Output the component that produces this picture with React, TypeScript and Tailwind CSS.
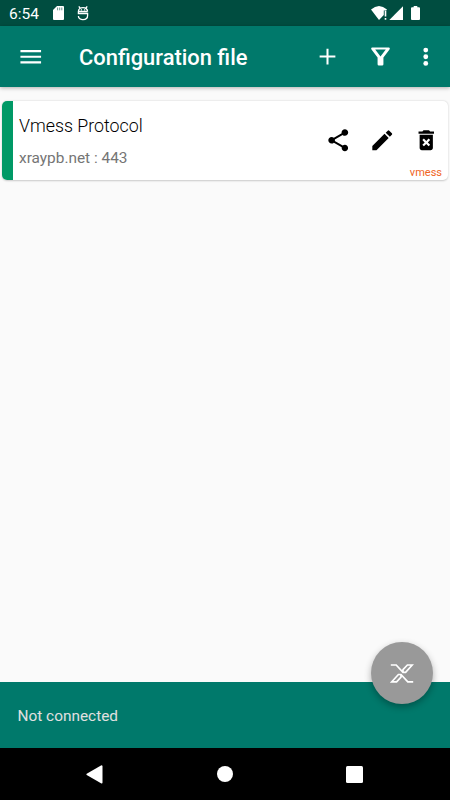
import React from "react";

type IconProps = { size: number; className?: string; children: React.ReactNode };

function Icon({ size, className = "", children }: IconProps) {
  return (
    <svg width={size} height={size} viewBox="0 0 24 24" fill="currentColor" className={`shrink-0 ${className}`}>
      {children}
    </svg>
  );
}

function StatusBar() {
  return (
    <div className="flex h-[26px] shrink-0 items-center bg-[#004d40] pl-[9px] text-white">
      <span className="w-[44px] pt-px text-[15.5px] leading-[26px]">6:54</span>
      <svg width="11" height="14" viewBox="0 0 11 14" className="shrink-0">
        <path d="M4 0H10Q11 0 11 1V13Q11 14 10 14H1Q0 14 0 13V4Z" fill="#fff" />
        <path d="M4.6 1.5V4.3M6.7 1.5V4.3M8.8 1.5V4.3" stroke="#004d40" strokeWidth="0.6" />
      </svg>
      <svg width="12" height="15" viewBox="0 0 12 15" className="ml-[13px] shrink-0" fill="none" stroke="#fff" strokeWidth="1.3">
        <path d="M1.8 .4 3 2M10.2 .4 9 2M10.6 5.5C10.6 .4 1.4 .4 1.4 5.5V7.5H10.6V9.6C10.6 15 1.4 15 1.4 10M1.4 5.5H10.6" />
        <path d="M3.8 3.8H5M7 3.8H8.2" />
      </svg>
      <svg width="51" height="16" viewBox="0 0 51 16" className="ml-[282px] shrink-0" fill="#fff">
        <path d="M0 4.6Q8 -2.4 16 4.6L15.2 5.6H12.8V10L8 15Z" />
        <path d="M13.7 5.8H15.3V11.6H13.7ZM13.7 13H15.3V14.8H13.7Z" />
        <path d="M18.3 15H32V1.2Z" />
        <path d="M42.7 1H46.3V2.3H48Q49 2.3 49 3.3V14Q49 15 48 15H41Q40 15 40 14V3.3Q40 2.3 41 2.3H42.7Z" />
      </svg>
    </div>
  );
}

function AppBar() {
  return (
    <header className="z-10 flex h-[61px] shrink-0 items-center bg-[#00796b] pl-[17px] text-white shadow-[0_1px_4px_rgba(0,0,0,0.3)]">
      <Icon size={27.5}>
        <path d="M3 17.8h18v-1.8H3v1.8zm0-4.9h18v-1.8H3v1.8zm0-6.7v1.8h18V6.2H3z" />
      </Icon>
      <h1 className="ml-[34.5px] w-[234.5px] pt-[3px] text-[21.9px] font-medium leading-[30px] whitespace-nowrap">
        Configuration file
      </h1>
      <Icon size={27}>
        <path d="M19 12.9h-6.1V19h-1.8v-6.1H5v-1.8h6.1V5h1.8v6.1H19z" />
      </Icon>
      <Icon size={27} className="ml-[26px]">
        <path d="M4.6 4H19.4C20.4 4 20.5 5 20 5.7L14.6 12.9V18.8Q14.6 20 13.4 20H10.6Q9.4 20 9.4 18.8V12.9L4 5.7C3.5 5 3.6 4 4.6 4ZM7.3 5.8L12 12 16.7 5.8Z" fillRule="evenodd" />
      </Icon>
      <Icon size={27.5} className="ml-[18.5px]">
        <circle cx="12" cy="6.2" r="2.1" />
        <circle cx="12" cy="12" r="2.1" />
        <circle cx="12" cy="17.8" r="2.1" />
      </Icon>
    </header>
  );
}

function ServerCard() {
  return (
    <div className="mx-[2px] mt-[13.5px] flex h-[79.5px] overflow-hidden rounded-[5px] bg-white shadow-[0_0.5px_2px_rgba(0,0,0,0.2)]">
      <div className="w-[11px] shrink-0 bg-[#009966]" />
      <div className="flex w-[312px] shrink-0 flex-col pl-[6px] pt-[13px]">
        <div className="text-[17.8px] font-light leading-[24px] text-black">Vmess Protocol</div>
        <div className="mt-[10.5px] text-[15.4px] leading-[20px] text-[#757575]">xraypb.net : 443</div>
      </div>
      <div className="flex flex-1 flex-col">
        <div className="flex pt-[26px] text-black">
          <Icon size={26.5}>
            <path d="M18 16.08c-.76 0-1.44.3-1.96.77L8.91 12.7c.05-.23.09-.46.09-.7s-.04-.47-.09-.7l7.05-4.11c.54.5 1.25.81 2.04.81 1.66 0 3-1.34 3-3s-1.34-3-3-3-3 1.34-3 3c0 .24.04.47.09.7L8.04 9.81C7.5 9.31 6.79 9 6 9c-1.66 0-3 1.34-3 3s1.34 3 3 3c.79 0 1.5-.31 2.04-.81l7.12 4.16c-.05.21-.08.43-.08.65 0 1.61 1.31 2.92 2.92 2.92s2.92-1.31 2.92-2.92-1.31-2.92-2.92-2.92z" />
          </Icon>
          <Icon size={26.5} className="ml-[17px]">
            <path d="M3 17.25V21h3.75L17.81 9.94l-3.75-3.75L3 17.25zM20.71 7.04a.996.996 0 0 0 0-1.41l-2.34-2.34a.996.996 0 0 0-1.41 0l-1.83 1.83 3.75 3.75 1.83-1.83z" />
          </Icon>
          <Icon size={26.5} className="ml-[17.5px]">
            <path d="M6 19c0 1.1.9 2 2 2h8c1.1 0 2-.9 2-2V7H6v12zm2.46-7.12 1.41-1.41L12 12.59l2.12-2.12 1.41 1.41L13.41 14l2.12 2.12-1.41 1.41L12 15.41l-2.12 2.12-1.41-1.41L10.59 14l-2.13-2.12zM15.5 4l-1-1h-5l-1 1H5v2h14V4z" />
          </Icon>
        </div>
        <div className="mt-[13px] pr-[6px] text-right text-[11px] leading-[13px] text-[#f06423]">vmess</div>
      </div>
    </div>
  );
}

function ConnectButton() {
  return (
    <button className="absolute right-[17.5px] top-[-40px] flex size-[61.5px] items-center justify-center rounded-full bg-[#999] shadow-[0_3px_7px_rgba(0,0,0,0.3)]">
      <svg width="24" height="20" viewBox="0 0 24 20" fill="none" stroke="#fff" strokeWidth="1.7">
        <path d="M.8 2H6.2L13 9.3H15.6L22.2 2H17.4L13 6.6V9.3" />
        <path d="M23.2 18.8H17.8L11 11.5H8.4L1.8 18.8H6.6L11 14.2V11.5" />
      </svg>
    </button>
  );
}

export default function App() {
  return (
    <div className="flex h-[800px] w-[450px] flex-col overflow-hidden bg-[#fafafa] font-[Roboto,sans-serif]">
      <StatusBar />
      <AppBar />
      <main className="flex-1">
        <ServerCard />
      </main>
      <div className="relative flex h-[66px] shrink-0 items-center bg-[#00796b] pl-[17.5px] text-[15.4px] text-[#e0e0e0]">
        <span className="pt-[3px]">Not connected</span>
        <ConnectButton />
      </div>
      <nav className="flex h-[52px] shrink-0 items-center bg-black pl-[85.5px]">
        <svg width="17" height="19" viewBox="0 0 17 19" fill="#fff">
          <path d="M.7 8.7 15 .4Q16.5 0 16.5 1.4V17.4Q16.5 18.8 15 18.2L.7 10.1Q0 9.4.7 8.7Z" />
        </svg>
        <div className="ml-[114.5px] size-4 rounded-full bg-white" />
        <div className="ml-[113px] size-[17px] rounded-[1.5px] bg-white" />
      </nav>
    </div>
  );
}
